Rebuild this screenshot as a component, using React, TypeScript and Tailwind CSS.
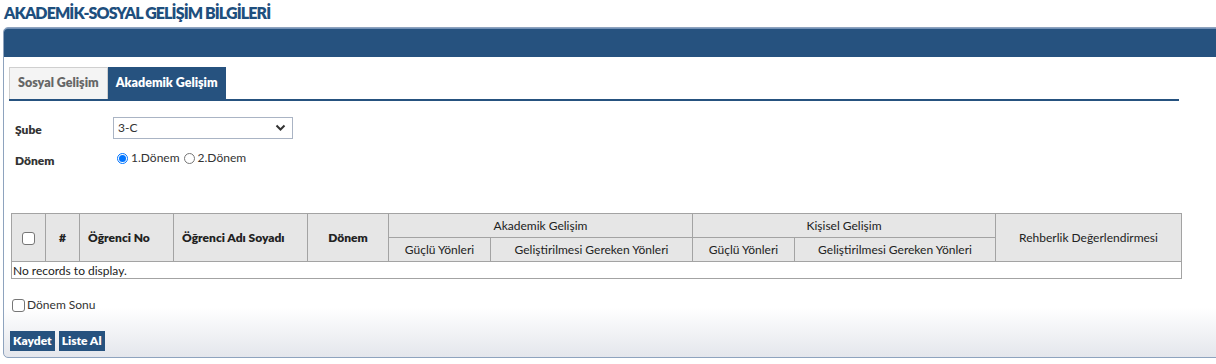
const bold = 'font-["Lato",sans-serif] font-extrabold'
const body = 'font-["Lato",sans-serif]'

function Th({
  children,
  className = '',
  rowSpan,
  colSpan,
  b,
}: {
  children?: React.ReactNode
  className?: string
  rowSpan?: number
  colSpan?: number
  b?: boolean
}) {
  return (
    <th
      rowSpan={rowSpan}
      colSpan={colSpan}
      className={`border border-[#a3a3a3] bg-[#e6e6e6] px-2 text-[12px] text-[#222] ${b ? 'font-extrabold' : 'font-normal'} ${className}`}
    >
      {children}
    </th>
  )
}

function Box() {
  return <span className="inline-block h-[13px] w-[13px] rounded-[3px] border border-[#767676] bg-white align-middle" />
}

export default function App() {
  return (
    <div className={`h-[364px] w-[1216px] overflow-hidden bg-white ${body}`}>
      <h1 className={`${bold} pl-[4px] pt-[2px] text-[16px] leading-[22px] tracking-[-0.9px] text-[#1e4f7e]`}>
        AKADEMİK-SOSYAL GELİŞİM BİLGİLERİ
      </h1>

      <div className="ml-[3px] mt-[3px] h-[331px] w-[1230px] rounded-[5px] border border-[#8ea3be] bg-gradient-to-b from-white from-85% to-[#e4e6ec]">
        <div className="h-[29px] rounded-t-[4px] border-t border-[#7391b6] bg-[#26527f]" />

        {/* sekmeler */}
        <div className="ml-[5px] mt-[10px] flex w-[1170px] border-b-2 border-[#26527f]">
          <div className={`${bold} flex h-[32px] items-center border border-b-0 border-[#cfcfcf] bg-[#f4f4f4] px-[8px] text-[12.5px] text-[#666]`}>
            Sosyal Gelişim
          </div>
          <div className={`${bold} flex h-[32px] items-center border border-b-0 border-[#26527f] bg-[#26527f] px-[7px] text-[12.5px] text-white`}>
            Akademik Gelişim
          </div>
        </div>

        <div className="mt-[16px] flex items-center">
          <label className={`${bold} w-[109px] pl-[11px] pt-[4px] text-[12px] text-[#333]`}>Şube</label>
          <div className="flex h-[22px] w-[180px] items-center justify-between border border-[#aab4c4] bg-white pl-[4px] pr-[6px] text-[12px] text-[#333]">
            <span>3-C</span>
            <svg width="11" height="8" viewBox="0 0 11 8">
              <path d="M1.5 1.5 L5.5 5.5 L9.5 1.5" fill="none" stroke="#333" strokeWidth="2" />
            </svg>
          </div>
        </div>

        <div className="mt-[7px] flex">
          <label className={`${bold} w-[113px] pl-[11px] pt-[6px] text-[12px] text-[#333]`}>Dönem</label>
          <div className="flex items-center text-[12px] text-[#333]">
            <span className="mr-[3px] flex h-[11px] w-[11px] items-center justify-center rounded-full border border-[#0075ff] bg-white">
              <span className="h-[7px] w-[7px] rounded-full bg-[#0075ff]" />
            </span>
            <span>1.Dönem</span>
            <span className="ml-[4px] mr-[3px] h-[11px] w-[11px] rounded-full border border-[#767676] bg-white" />
            <span>2.Dönem</span>
          </div>
        </div>

        {/* liste */}
        <table className="ml-[7px] mt-[43px] w-[1170px] table-fixed border-collapse border border-[#a3a3a3]">
          <colgroup>
            <col className="w-[34px]" />
            <col className="w-[34px]" />
            <col className="w-[94px]" />
            <col className="w-[134px]" />
            <col className="w-[81px]" />
            <col className="w-[102px]" />
            <col className="w-[202px]" />
            <col className="w-[102px]" />
            <col className="w-[201px]" />
            <col className="w-[186px]" />
          </colgroup>
          <thead>
            <tr className="h-[24px]">
              <Th rowSpan={2} className="!px-0 text-center">
                <Box />
              </Th>
              <Th rowSpan={2} b className="text-center">#</Th>
              <Th rowSpan={2} b className="text-left">Öğrenci No</Th>
              <Th rowSpan={2} b className="text-left">Öğrenci Adı Soyadı</Th>
              <Th rowSpan={2} b className="text-center">Dönem</Th>
              <Th colSpan={2} className="text-center">Akademik Gelişim</Th>
              <Th colSpan={2} className="text-center">Kişisel Gelişim</Th>
              <Th rowSpan={2} className="text-center">Rehberlik Değerlendirmesi</Th>
            </tr>
            <tr className="h-[24px]">
              <Th className="text-center">Güçlü Yönleri</Th>
              <Th className="text-center">Geliştirilmesi Gereken Yönleri</Th>
              <Th className="text-center">Güçlü Yönleri</Th>
              <Th className="text-center">Geliştirilmesi Gereken Yönleri</Th>
            </tr>
          </thead>
          <tbody>
            <tr className="h-[17px]">
              <td colSpan={10} className="bg-white px-[1px] text-[12px] leading-[15px] text-[#222]">
                No records to display.
              </td>
            </tr>
          </tbody>
        </table>

        <div className="ml-[8px] mt-[17px] flex items-center text-[12px] text-[#333]">
          <Box />
          <span className="ml-[2px]">Dönem Sonu</span>
        </div>

        <div className="ml-[6px] mt-[17px] flex gap-[4px]">
          <button className={`${bold} h-[20px] bg-[#26527f] px-[3px] text-[12px] text-white`}>Kaydet</button>
          <button className={`${bold} h-[20px] bg-[#26527f] px-[3px] text-[12px] text-white`}>Liste Al</button>
        </div>
      </div>
    </div>
  )
}
